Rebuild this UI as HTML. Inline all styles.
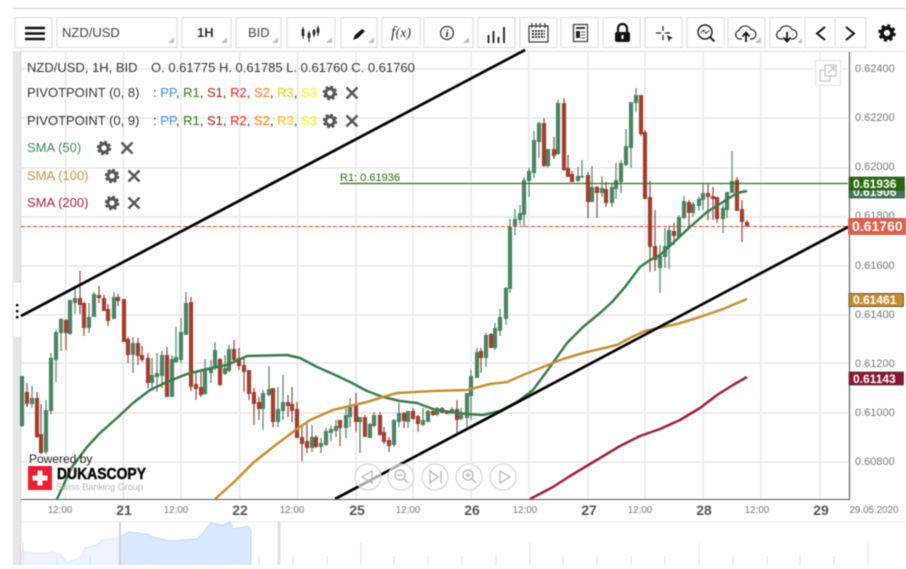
<!DOCTYPE html>
<html><head><meta charset="utf-8"><title>NZD/USD</title>
<style>
html,body{margin:0;padding:0;background:#fff;width:906px;height:569px;overflow:hidden}
svg{display:block;font-family:"Liberation Sans",sans-serif;filter:blur(.4px)}
.b{fill:#fff;stroke:#dfdfdf;stroke-width:1.2}
.t{fill:#bbb}
.lg{font-size:13px}
.ax{font-size:11px;fill:#777}
.tm{font-size:9.8px;fill:#777;text-anchor:middle}
.dy{font-size:14px;font-weight:bold;fill:#555;text-anchor:middle}
.tag{font-size:12px;font-weight:bold;fill:#fff}
</style></head><body>
<svg width="906" height="569" viewBox="0 0 906 569" xmlns="http://www.w3.org/2000/svg">
<defs>
<g id="gear"><circle r="4.2" fill="none" stroke="#555" stroke-width="3"/><circle r="6.2" fill="none" stroke="#555" stroke-width="2.2" stroke-dasharray="2.9 1.97"/></g>
<g id="x"><path d="M-5.5-5.5L5.5 5.5M5.5-5.5L-5.5 5.5" stroke="#555" stroke-width="2.4" fill="none"/></g>
</defs>

<rect x="13" y="8" width="893" height="1" fill="#c9c9c9"/>
<rect x="13" y="51" width="893" height="1" fill="#ddd"/>
<rect x="13" y="51" width="7" height="514" fill="#e6e6e6"/>
<rect x="20" y="51" width="1" height="514" fill="#d0d0d0"/>
<rect x="13" y="282" width="8" height="55" fill="#fff" stroke="#d4d4d4" stroke-width=".6"/>
<rect x="16" y="304" width="2.4" height="2.4"/><rect x="16" y="310" width="2.4" height="2.4"/><rect x="16" y="316" width="2.4" height="2.4"/>

<!-- grid -->
<g stroke="#e8e8e8" stroke-width="1.6" fill="none">
<path d="M21 69H848M21 118H848M21 168H848M21 217H848M21 266H848M21 315H848M21 363H848M21 462H848"/>
<path stroke="#ece4e4" d="M21 413H848"/>
<path d="M65.5 52V499M123.5 52V499M181 52V499M239.5 52V499M297.5 52V499M356 52V499M413 52V499M471 52V499M529 52V499M588 52V499M645 52V499M703 52V499M761 52V499M820 52V499"/>
</g>

<!-- toolbar -->
<rect class="b" x="15" y="17.500" width="37" height="30"/>
<rect class="b" x="57" y="17.500" width="120" height="30"/>
<rect class="b" x="182" y="17.500" width="49" height="30"/>
<rect class="b" x="236" y="17.500" width="45" height="30"/>
<rect class="b" x="287" y="17.500" width="48" height="30"/>
<rect class="b" x="341" y="17.500" width="36" height="30"/>
<rect class="b" x="382" y="17.500" width="38" height="30"/>
<rect class="b" x="424" y="17.500" width="49" height="30"/>
<rect class="b" x="478" y="17.500" width="37" height="30"/>
<rect class="b" x="520" y="17.500" width="37" height="30"/>
<rect class="b" x="561" y="17.500" width="37" height="30"/>
<rect class="b" x="603" y="17.500" width="37" height="30"/>
<rect class="b" x="645" y="17.500" width="37" height="30"/>
<rect class="b" x="687" y="17.500" width="37" height="30"/>
<rect class="b" x="728" y="17.500" width="37" height="30"/>
<path d="M802 17.500H770V47.500H802" fill="#fff" stroke="#dfdfdf" stroke-width="1.2"/>
<rect class="b" x="805" y="17.500" width="30" height="30"/>
<rect class="b" x="835" y="17.500" width="31" height="30"/>
<path class="t" d="M174 37V43H168ZM227 37V43H221ZM278 37V43H272ZM332 37V43H326ZM374 37V43H368ZM469 37V43H463ZM761 37V43H755ZM802 38V43H797Z"/>

<path d="M25 28H45M25 33.500H45M25 39H45" stroke="#111" stroke-width="2.400" fill="none"/>
<text x="62" y="37" font-size="13" fill="#444">NZD/USD</text>
<text x="197" y="37" font-size="13" font-weight="bold" fill="#333">1H</text>
<text x="248" y="37" font-size="13" fill="#444">BID</text>
<path d="M303 27V39M309 31V42M314 29V37M318 26V36" stroke="#222" stroke-width="1"/>
<path d="M303 29V36M309 33V38M314 30V35M318 28V33" stroke="#222" stroke-width="2.600"/>
<path d="M353 40L355 35L362 29L365 31L358 38Z" fill="#111"/>
<text x="391" y="37" font-family="Liberation Serif,serif" font-style="italic" font-size="14" fill="#333"><tspan font-size="16">f</tspan>(x)</text>
<circle cx="447" cy="33" r="6.500" fill="none" stroke="#333" stroke-width="1.200"/>
<text x="447" y="37" text-anchor="middle" font-family="Liberation Serif,serif" font-style="italic" font-weight="bold" font-size="11" fill="#222">i</text>
<path d="M488.500 35V43M493.500 31V43M498.500 37V43M504 27V43" stroke="#333" stroke-width="2"/>
<g fill="none" stroke="#333" stroke-width="1.200"><rect x="529" y="26" width="19" height="16"/><path d="M532 23V28M536 23V28M540 23V28M545 23V28"/></g>
<path d="M532 31H545M532 34H545M532 37H545" stroke="#333" stroke-width="2" stroke-dasharray="2 1"/>
<rect x="573.500" y="24.500" width="14" height="17" fill="none" stroke="#333" stroke-width="1.200"/>
<path d="M576 28H585" stroke="#333" stroke-width="2"/><rect x="576" y="31" width="4" height="7" fill="#222"/><path d="M581 32H585M581 35H585M581 38H585" stroke="#555" stroke-width="1"/>
<path d="M618 33V28.500A4.500 4.500 0 0 1 627 28.500V33" fill="none" stroke="#111" stroke-width="2.200"/>
<rect x="615" y="32" width="15" height="10" rx="2" fill="#111"/><rect x="621.500" y="35" width="2" height="4" fill="#fff"/>
<path d="M663 26V31M663 35V40M656 33H661M665 33H670" stroke="#222" stroke-width="1.200"/><path d="M667 35L673 38L670 39L669 42Z" fill="#222"/>
<circle cx="705" cy="32" r="7" fill="none" stroke="#222" stroke-width="1.500"/><path d="M710 37L714.500 41.500" stroke="#222" stroke-width="2"/><path d="M701 33L703.500 30L706 33.500L709 30.500" fill="none" stroke="#333"/>
<path d="M742 39H740A4.300 4.300 0 0 1 739 30.500A6.500 6.500 0 0 1 751 29.500A4.800 4.800 0 0 1 752 39H750" fill="none" stroke="#222" stroke-width="1.200"/>
<path d="M746 42V33M742.500 36.500L746 32.500L749.500 36.500" fill="none" stroke="#111" stroke-width="1.800"/>
<path d="M783 39H781A4.300 4.300 0 0 1 780 30.500A6.500 6.500 0 0 1 792 29.500A4.800 4.800 0 0 1 793 39H791" fill="none" stroke="#222" stroke-width="1.200"/>
<path d="M787 32V41M783.500 37.500L787 41.500L790.500 37.500" fill="none" stroke="#111" stroke-width="1.800"/>
<path d="M825 27L817 33.500L825 40" fill="none" stroke="#111" stroke-width="2"/>
<path d="M846 27L854 33.500L846 40" fill="none" stroke="#111" stroke-width="2"/>
<g transform="translate(887 33)"><circle r="5" fill="none" stroke="#111" stroke-width="3.800"/><circle r="7.500" fill="none" stroke="#111" stroke-width="2.600" stroke-dasharray="3.100 2.790"/></g>

<!-- popout -->
<rect x="815.500" y="60.500" width="25" height="25" fill="#fff" stroke="#e0e0e0"/>
<g fill="none" stroke="#c6c6c6" stroke-width="1.300"><rect x="820" y="70" width="10" height="11"/><rect x="825" y="65" width="11" height="11" fill="#fff"/><path d="M828 73L834 67M830 67H834V71"/></g>

<!-- candles: wicks -->
<path fill="none" stroke="#5d8d73" stroke-width="1.300" d="M22 376V427M32 386V408M46 400V454M51 353V414M56 330V382M61 318V351M70 300V335M75 288V314M89 303V333M94 292V317M114 292V319M133 337V373M152 358V391M157 353V392M162 351V388M172 355V397M176 327V363M181 318V363M186 292V335M205 359V395M211 360V383M215 342V370M225 355V375M229 345V372M263 390V430M269 366V396M278 387V427M283 375V420M312 425V452M321 438V453M326 428V446M331 426V441M336 420V437M346 408V438M350 398V427M360 417V453M370 423V438M374 412V427M394 419V447M399 403V427M408 411V428M423 408V426M428 410V422M437 407V416M452 407V414M461 408V420M467 393V427M471 370V420M477 348V378M486 333V367M495 323V350M500 309V336M506 287V325M510 219V293M515 209V235M520 205V225M524 177V227M529 168V197M534 131V178M539 122V158M548 149V168M558 100V155M578 167V182M582 160V178M592 166V202M602 176V197M612 183V207M616 163V199M621 160V193M626 129V166M631 102V168M636 88V112M660 245V293M665 228V268M669 225V269M679 215V238M684 196V219M693 202V217M699 197V211M703 183V210M723 205V233M727 192V218M732 151V193"/>
<path fill="none" stroke="#965549" stroke-width="1.300" d="M27 383V407M37 392V438M41 404V454M66 319V350M80 271V314M84 302V336M99 286V303M104 295V311M108 304V326M118 294V306M124 299V342M128 337V363M138 338V365M142 346V362M148 353V388M167 347V397M191 297V391M196 372V400M201 372V397M220 358V386M234 340V362M239 348V370M244 358V392M249 370V400M254 388V425M259 397V420M273 388V427M288 395V417M292 387V422M297 402V438M302 427V461M307 421V453M316 435V448M340 420V446M356 393V432M365 415V437M380 412V436M384 427V444M389 437V452M404 412V428M413 408V420M418 415V432M433 408V416M442 407V413M447 411V414M457 400V433M481 348V373M491 333V348M544 118V167M554 137V159M564 98V171M568 155V177M572 171V182M588 172V218M597 186V218M606 182V207M641 95V136M645 130V199M650 181V272M655 210V271M674 223V245M689 200V226M708 183V220M713 187V220M717 197V223M737 177V211M742 200V242M747 220V227"/>
<!-- candles: bodies -->
<path fill="none" stroke="#4a8464" stroke-width="4.200" d="M22 376V426M32 398V404M46 410V452M51 358V411M56 332V360M61 319V333M70 300V334M75 298V303M89 317V328M94 294V317M114 297V319M133 343V355M152 375V383M157 373V377M162 355V376M172 359V397M176 357V362M181 332V360M186 303V335M205 370V394M211 367V373M215 350V368M225 368V374M229 349V371M263 393V409M269 389V395M278 409V422M283 402V411M312 437V448M321 443V447M326 431V445M331 429V433M336 426V431M346 415V428M350 405V417M360 417V422M370 424V438M374 415V426M394 420V445M399 413V422M408 411V422M423 420V425M428 411V422M437 408V415M452 409V413M461 415V419M467 393V418M471 376V396M477 352V378M486 335V358M495 328V348M500 317V331M506 288V319M510 227V289M515 219V227M520 213V220M524 180V215M529 171V181M534 140V173M539 123V142M548 149V166M558 103V154M578 176V181M582 176V177.500M592 187V202M602 188V193M612 187V203M616 180V189M621 163V182M626 146V165M631 102V148M636 95V103M660 256V268M665 246V257M669 230V247M679 217V237M684 201V218M693 204V213M699 199V206M703 193V200M723 208V219M727 192V210M732 181V193"/>
<path fill="none" stroke="#a23f2e" stroke-width="4.200" d="M27 392V404M37 398V437M41 434V453M66 320V333M80 298V305M84 303V328M99 295V298M104 298V311M108 309V321M118 297V301M124 299V342M128 339V355M138 343V356M142 355V360M148 358V383M167 355V397M191 302V387M196 384V389M201 387V395M220 359V385M234 349V360M239 358V366M244 365V372M249 370V394M254 392V404M259 402V409M273 388V422M288 402V406M292 404V411M297 409V438M302 437V444M307 441V448M316 437V447M340 420V428M356 404V422M365 417V437M380 415V435M384 432V442M389 440V446M404 413V421M413 411V419M418 416V424M433 411V415M442 408V413M447 412V414M457 409V420M481 351V358M491 334V348M544 123V166M554 149V156M564 103V170M568 168V177M572 174V182M588 175V202M597 187V193M606 189V203M641 95V134M645 132V199M650 197V247M655 246V260M674 231V236M689 202V213M708 193V197M713 196V199M717 197V219M737 180V211M742 209V222M747 222V226"/>

<!-- hlines -->
<path d="M340 183.500H848" stroke="#2f7010" stroke-width="1.300"/>
<path d="M21 226.500H848" stroke="#e8452f" stroke-width="1.100" stroke-dasharray="4 2"/>
<text x="340" y="181" font-size="11" fill="#2f6d12">R1: 0.61936</text>

<!-- MAs -->
<polyline fill="none" stroke="#3a7d4c" stroke-width="2.500" stroke-linejoin="round" points="57,499 72,467 87,447 100,433 117,418 133,403 150,390 167,382 187,374 207,369 227,365 247,356 287,355 300,358 317,367 333,374 350,382 367,391 383,397 400,401 417,403 433,409 450,412 467,414 483,415 500,411 517,402 533,390 550,367 567,343 583,327 600,313 612,302 625,287 640,267 650,260 660,255 673,243 690,227 707,212 723,202 737,193 747,191"/>
<polyline fill="none" stroke="#c68f33" stroke-width="2.500" stroke-linejoin="round" points="215,499 233,483 253,463 273,447 297,429 310,420 333,410 367,402 383,397 397,393 433,391 467,390 490,384 507,382 523,375 543,367 563,359 583,353 600,349 617,345 630,338 645,331 658,328 677,324 700,317 723,309 747,299"/>
<polyline fill="none" stroke="#a01f3d" stroke-width="2.500" stroke-linejoin="round" points="530,499 553,487 570,476 585,467 600,458 620,446 640,436 660,429 680,420 700,408 717,395 733,385 747,377"/>

<!-- trendlines -->
<path d="M21 316L525 50M335 499L848 227" stroke="#000" stroke-width="2.700" fill="none"/>

<!-- legend -->
<g class="lg" fill="#333">
<text x="27" y="72">NZD/USD, 1H, BID</text>
<text x="151" y="72">O. 0.61775 H. 0.61785 L. 0.61760 C. 0.61760</text>
<text x="27" y="97">PIVOTPOINT (0, 8)</text>
<text x="153" y="97">: <tspan fill="#3f8cff">PP</tspan>, <tspan fill="#2c7a1a">R1</tspan>, <tspan fill="#b01c1c">S1</tspan>, <tspan fill="#ff1a1a">R2</tspan>, <tspan fill="#ff7a00">S2</tspan>, <tspan fill="#ffc000">R3</tspan>, <tspan fill="#ffee00">S3</tspan></text>
<text x="27" y="125">PIVOTPOINT (0, 9)</text>
<text x="153" y="125">: <tspan fill="#3f8cff">PP</tspan>, <tspan fill="#2c7a1a">R1</tspan>, <tspan fill="#b01c1c">S1</tspan>, <tspan fill="#ff1a1a">R2</tspan>, <tspan fill="#ff7a00">S2</tspan>, <tspan fill="#ffc000">R3</tspan>, <tspan fill="#ffee00">S3</tspan></text>
<text x="27" y="152" fill="#3f8a58">SMA (50)</text>
<text x="27" y="180" fill="#c8963e">SMA (100)</text>
<text x="27" y="207" fill="#a8233f">SMA (200)</text>
</g>
<use href="#gear" x="330" y="93"/><use href="#x" x="352" y="93"/>
<use href="#gear" x="330" y="121"/><use href="#x" x="352" y="121"/>
<use href="#gear" x="104" y="148"/><use href="#x" x="127" y="148"/>
<use href="#gear" x="112" y="176"/><use href="#x" x="134" y="176"/>
<use href="#gear" x="112" y="203"/><use href="#x" x="134" y="203"/>

<!-- logo -->
<text x="29" y="463" font-size="12" fill="#222">Powered by</text>
<rect x="28" y="466" width="24" height="24" fill="#ee1c2e"/>
<path d="M37.500 470.500H42.500V475.500H47.500V480.500H42.500V485.500H37.500V480.500H32.500V475.500H37.500Z" fill="#fff"/>
<text x="57" y="479" font-size="15.500" font-weight="bold" fill="#0a0a0a" stroke="#0a0a0a" stroke-width=".5" textLength="89" lengthAdjust="spacingAndGlyphs">DUKASCOPY</text>
<text x="56" y="490" font-size="9.500" fill="#b5b5b5" textLength="87" lengthAdjust="spacingAndGlyphs">Swiss Banking Group</text>

<!-- nav buttons -->
<g fill="rgba(255,255,255,.65)" stroke="#cfcfcf" stroke-width="1.100">
<circle cx="368" cy="477" r="13"/><circle cx="401" cy="477" r="13"/><circle cx="435" cy="477" r="13"/><circle cx="469" cy="477" r="13"/><circle cx="503" cy="477" r="13"/>
</g>
<g fill="none" stroke="#b5b5b5" stroke-width="1.300">
<path d="M372 471V483L362 477Z"/>
<circle cx="400" cy="475" r="5"/><path d="M404 479L408 483M397.500 475H402.500"/>
<path d="M430 471L438 477L430 483ZM441 471V483"/>
<circle cx="468" cy="475" r="5"/><path d="M472 479L476 483M465.500 475H470.500M468 472.500V477.500"/>
<path d="M500 471L510 477L500 483Z"/>
</g>

<!-- axes -->
<path d="M849.500 52V499.500H21" fill="none" stroke="#555" stroke-width="1.100"/>
<g class="ax">
<text x="855" y="72">0.62400</text>
<text x="855" y="121">0.62200</text>
<text x="855" y="170">0.62000</text>
<text x="855" y="219">0.61800</text>
<text x="855" y="269">0.61600</text>
<text x="855" y="318">0.61400</text>
<text x="855" y="367">0.61200</text>
<text x="855" y="416">0.61000</text>
<text x="855" y="465">0.60800</text>
</g>
<g class="tm">
<text x="60" y="513">12:00</text><text x="176" y="513">12:00</text><text x="292" y="513">12:00</text><text x="408" y="513">12:00</text><text x="525" y="513">12:00</text><text x="640" y="513">12:00</text><text x="757" y="513">12:00</text><text x="874" y="513">29.05.2020</text>
</g>
<g class="dy">
<text x="124" y="515">21</text><text x="240" y="515">22</text><text x="357" y="515">25</text><text x="472" y="515">26</text><text x="589" y="515">27</text><text x="704" y="515">28</text><text x="821" y="515">29</text>
</g>

<!-- tags -->
<rect x="849" y="187" width="55.500" height="11" fill="#3d7a4d" stroke="#333" stroke-width=".6"/>
<text class="tag" x="853" y="196">0.61906</text>
<rect x="849" y="177" width="55.500" height="13" fill="#276908" stroke="#333" stroke-width=".6"/>
<text class="tag" x="853" y="188">0.61936</text>
<rect x="848" y="218" width="58" height="17" fill="#d9604c"/>
<text x="852" y="231" font-size="14" font-weight="bold" fill="#fff">0.61760</text>
<rect x="849" y="293.500" width="54.500" height="13" fill="#c68b2e" stroke="#444" stroke-width=".8"/>
<text class="tag" x="853" y="304">0.61461</text>
<rect x="849" y="372" width="54.500" height="13" fill="#8e1330" stroke="#444" stroke-width=".8"/>
<text class="tag" x="853" y="383">0.61143</text>

<!-- navigator -->
<rect x="21" y="521.500" width="885" height="1" fill="#ececec"/>
<path d="M21 552L33 553L47 553L52 552L60 554L67 562L80 558L85 548L97 545L102 540L112 539L120 537V565H21Z" fill="#edf4fe"/>
<path d="M120 537L128 532L137 533L147 534L153 537L170 541L197 539L203 533L210 523L223 525L230 522L233 529L248 526L251 530V565H120Z" fill="#d9e8fd"/>
<path d="M21 552L33 553L47 553L52 552L60 554L67 562L80 558L85 548L97 545L102 540L112 539L120 537" fill="none" stroke="#dce9fd"/>
<path d="M120 537L128 532L137 533L147 534L153 537L170 541L197 539L203 533L210 523L223 525L230 522L233 529L248 526L251 530V565" fill="none" stroke="#c3daf9"/>
<g stroke="#e4e4e4" stroke-width="1.300" fill="none">
<path d="M57 556V565M90 556V565M124 556V565M158 556V565M225 556V565M259 556V565M293 556V565M327 556V565M394 556V565M428 556V565M462 556V565M496 556V565M563 556V565M597 556V565M631 556V565M665 556V565M733 556V565M767 556V565M800 556V565M834 556V565"/>
<path d="M23 543V565M192 543V565M361 543V565M530 543V565M699 543V565M868 543V565"/>
</g>
<rect x="119" y="522" width="2" height="43" fill="#cfcfcf"/>
<rect x="277.500" y="522" width="3" height="43" fill="#e0e0e0"/>
</svg>
</body></html>
